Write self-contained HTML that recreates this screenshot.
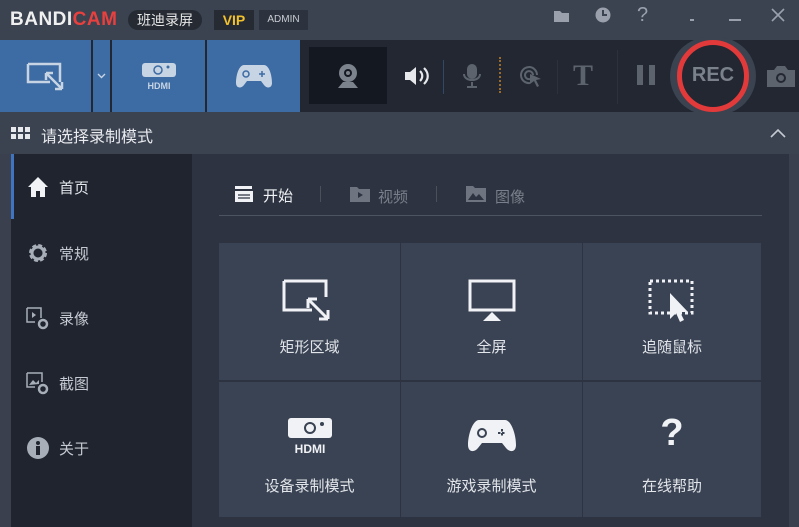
<!DOCTYPE html><html><head><meta charset="utf-8"><style>
*{margin:0;padding:0;box-sizing:border-box}
body{width:799px;height:527px;overflow:hidden;background:#3a404d;font-family:"Liberation Sans","Noto Sans CJK SC",sans-serif;position:relative;color:#d5d9e0}
.a{position:absolute}
.blue{background:#3d6ba3;top:40px;height:72px}
.cell{position:absolute;background:#3a4353;width:181px;height:137px}
.cell span{position:absolute;left:0;right:0;text-align:center;top:93px;font-size:15px;color:#e2e5ea}
.cell svg{position:absolute;left:50%;transform:translateX(-50%);top:34px}
.side{font-size:15px;color:#c5cad2}
</style></head><body>
<div class="a" style="left:0;top:0;width:799px;height:40px;background:#3b4250"></div>
<div class="a" style="left:10px;top:9px;font-size:19px;font-weight:bold;letter-spacing:0.5px;color:#f0f0f0">BANDI<span style="color:#e8403e">CAM</span></div>
<div class="a" style="left:128px;top:10px;width:74px;height:20px;border-radius:10px;background:#252a33;color:#e6e6e6;font-size:14px;text-align:center;line-height:20px">班迪录屏</div>
<div class="a" style="left:214px;top:10px;width:40px;height:20px;background:#252a33;color:#f2c12e;font-weight:bold;font-size:14px;text-align:center;line-height:20px">VIP</div>
<div class="a" style="left:259px;top:10px;width:49px;height:20px;background:#2d333e;color:#c9ccd2;font-size:10px;text-align:center;line-height:20px">ADMIN</div>
<svg class="a" style="left:552px;top:6px" width="20" height="20"><path d="M2 5h6l2 2h7v9H2z" fill="#9aa1ad"/></svg>
<svg class="a" style="left:594px;top:6px" width="18" height="18"><circle cx="9" cy="9" r="7.5" fill="#9aa1ad"/><path d="M9 4v5h4" stroke="#3b4250" stroke-width="2" fill="none"/></svg>
<div class="a" style="left:637px;top:4px;font-size:20px;color:#9aa1ad">?</div>
<div class="a" style="left:690px;top:19px;width:4px;height:2px;background:#9aa1ad"></div>
<div class="a" style="left:729px;top:19px;width:12px;height:2px;background:#9aa1ad"></div>
<svg class="a" style="left:771px;top:8px" width="14" height="14"><path d="M1 1L13 13M13 1L1 13" stroke="#9aa1ad" stroke-width="1.6"/></svg>
<div class="a" style="left:0;top:40px;width:799px;height:72px;background:#222731"></div>
<div class="a blue" style="left:0;width:91px"></div>
<div class="a blue" style="left:93px;width:17px"></div>
<div class="a blue" style="left:112px;width:93px"></div>
<div class="a blue" style="left:207px;width:93px"></div>
<svg class="a" style="left:26px;top:62px" width="42" height="30"><path d="M2 2h32v18" stroke="#c7d4e4" stroke-width="2.5" fill="none"/><path d="M24 20H2V2" stroke="#c7d4e4" stroke-width="2.5" fill="none"/><path d="M20 11l16 16M20 11h7M20 11v7M36 27h-7M36 27v-7" stroke="#c7d4e4" stroke-width="2.5" fill="none"/></svg>
<svg class="a" style="left:97px;top:73px" width="9" height="6"><path d="M1 1l3.5 3.5L8 1" stroke="#c7d4e4" stroke-width="1.4" fill="none"/></svg>
<svg class="a" style="left:141px;top:62px" width="36" height="28"><rect x="1" y="1" width="34" height="14" rx="3" fill="#c7d4e4"/><circle cx="17" cy="8" r="4" fill="none" stroke="#3d6ba3" stroke-width="1.5"/><circle cx="27" cy="5" r="1.5" fill="#3d6ba3"/><text x="18" y="27" font-size="9" font-weight="bold" text-anchor="middle" fill="#c7d4e4" font-family="Liberation Sans">HDMI</text></svg>
<svg class="a" style="left:236px;top:63px" width="36" height="26"><path d="M8 2h20c5 0 8 10 8 18 0 5-5 6-8 2l-3-4H11l-3 4c-3 4-8 3-8-2C0 12 3 2 8 2z" fill="#c7d4e4"/><circle cx="10" cy="11" r="3" fill="none" stroke="#3d6ba3" stroke-width="1.5"/><path d="M26 8v6M23 11h6" stroke="#3d6ba3" stroke-width="1.5"/></svg>
<div class="a" style="left:309px;top:47px;width:78px;height:57px;background:#141820"></div>
<svg class="a" style="left:334px;top:62px" width="28" height="28"><circle cx="14" cy="11" r="9" fill="#7d838d"/><circle cx="14" cy="11" r="4" fill="#141820"/><circle cx="14" cy="11" r="2" fill="#7d838d"/><path d="M4 26l5-6h10l5 6z" fill="#7d838d"/></svg>
<svg class="a" style="left:404px;top:65px" width="26" height="22"><path d="M1 7h5l6-5v18l-6-5H1z" fill="#e6e8ec"/><path d="M16 6c3 3 3 7 0 10M20 3c5 5 5 11 0 16" stroke="#e6e8ec" stroke-width="2.2" fill="none"/></svg>
<div class="a" style="left:443px;top:60px;width:1px;height:34px;background:#2f4a66"></div>
<svg class="a" style="left:462px;top:63px" width="20" height="26"><rect x="5" y="1" width="10" height="15" rx="5" fill="#5d636d"/><path d="M2 11c0 8 16 8 16 0M10 19v5M5 24h10" stroke="#5d636d" stroke-width="2" fill="none"/></svg>
<div class="a" style="left:499px;top:57px;width:2px;height:36px;border-left:2px dotted #9b6a2a"></div>
<svg class="a" style="left:519px;top:64px" width="24" height="26"><path d="M18 11a8 8 0 1 0-7 8" stroke="#5d636d" stroke-width="2" fill="none"/><path d="M14 11a4 4 0 1 0-3 4" stroke="#5d636d" stroke-width="2" fill="none"/><path d="M11 10l11 5-5 1 3 6-2 1-3-6-4 3z" fill="#5d636d"/></svg>
<div class="a" style="left:557px;top:60px;width:1px;height:34px;background:#2c313b"></div>
<div class="a" style="left:573px;top:59px;font-family:'Liberation Serif',serif;font-size:30px;font-weight:bold;color:#5d636d">T</div>
<div class="a" style="left:617px;top:50px;width:1px;height:54px;background:#2c313b"></div>
<div class="a" style="left:637px;top:65px;width:6px;height:20px;background:#5d636d"></div>
<div class="a" style="left:649px;top:65px;width:6px;height:20px;background:#5d636d"></div>
<div class="a" style="left:670px;top:37px;width:86px;height:78px;border-radius:39px;background:#3b4250"></div>
<div class="a" style="left:677px;top:40px;width:72px;height:72px;border-radius:50%;border:5px solid #e23a3a;background:#222731"></div>
<div class="a" style="left:677px;top:64px;width:72px;text-align:center;font-size:20px;font-weight:bold;color:#7b818b">REC</div>
<svg class="a" style="left:765px;top:64px" width="30" height="24"><path d="M2 6h7l3-4h8l3 4h7v17H2z" fill="#5d636d"/><circle cx="16" cy="14" r="5" fill="#222731"/><circle cx="16" cy="14" r="3" fill="#5d636d"/></svg>
<div class="a" style="left:0;top:112px;width:799px;height:42px;background:#3b4250"></div>
<svg class="a" style="left:11px;top:127px" width="19" height="12"><g fill="#e6e8ec"><rect x="0" y="0" width="5" height="5"/><rect x="7" y="0" width="5" height="5"/><rect x="14" y="0" width="5" height="5"/><rect x="0" y="7" width="5" height="5"/><rect x="7" y="7" width="5" height="5"/><rect x="14" y="7" width="5" height="5"/></g></svg>
<div class="a" style="left:41px;top:123px;font-size:16px;color:#e8eaee">请选择录制模式</div>
<svg class="a" style="left:770px;top:128px" width="16" height="10"><path d="M1 9l7-7 7 7" stroke="#c5cad2" stroke-width="1.6" fill="none"/></svg>
<div class="a" style="left:11px;top:154px;width:181px;height:373px;background:#1f242e"></div>
<div class="a" style="left:11px;top:154px;width:3px;height:65px;background:#3f74c0"></div>
<svg class="a" style="left:27px;top:176px" width="22" height="22"><path d="M11 1L1 11h3v10h5v-6h4v6h5V11h3z" fill="#f0f2f5"/></svg>
<div class="a side" style="left:59px;top:177px;color:#e4e7ec">首页</div>
<svg class="a" style="left:27px;top:242px" width="22" height="22"><circle cx="11" cy="11" r="7" fill="none" stroke="#a8aeb7" stroke-width="4" stroke-dasharray="3.5 2"/><circle cx="11" cy="11" r="6" fill="none" stroke="#a8aeb7" stroke-width="3"/></svg>
<div class="a side" style="left:59px;top:243px">常规</div>
<svg class="a" style="left:26px;top:307px" width="24" height="24"><path d="M1 1h14v10M9 15H1V1" stroke="#a8aeb7" stroke-width="1.5" fill="none"/><path d="M6 5l4 3-4 3z" fill="#a8aeb7"/><circle cx="17" cy="17" r="4" fill="none" stroke="#a8aeb7" stroke-width="2.5"/></svg>
<div class="a side" style="left:59px;top:308px">录像</div>
<svg class="a" style="left:26px;top:372px" width="24" height="24"><path d="M1 1h15v9M9 15H1V1" stroke="#a8aeb7" stroke-width="1.5" fill="none"/><path d="M3 13l4-5 3 3 3-3v4" fill="#a8aeb7"/><circle cx="17" cy="17" r="4" fill="none" stroke="#a8aeb7" stroke-width="2.5"/></svg>
<div class="a side" style="left:59px;top:373px">截图</div>
<svg class="a" style="left:27px;top:437px" width="22" height="22"><circle cx="11" cy="11" r="11" fill="#a8aeb7"/><circle cx="11" cy="6" r="2" fill="#1f242e"/><rect x="9" y="9" width="4" height="9" fill="#1f242e"/></svg>
<div class="a side" style="left:59px;top:438px">关于</div>
<div class="a" style="left:192px;top:154px;width:597px;height:373px;background:#2d3340"></div>
<svg class="a" style="left:234px;top:185px" width="20" height="18"><path d="M1 6h18v11H1z" fill="#f0f2f5"/><path d="M1 1l17 0v3H1z" fill="#f0f2f5"/><path d="M4 10h12M4 13h12" stroke="#2d3340" stroke-width="1.2"/></svg>
<div class="a" style="left:263px;top:185px;font-size:15px;color:#f0f2f5">开始</div>
<div class="a" style="left:320px;top:186px;width:1px;height:16px;background:#4a505c"></div>
<svg class="a" style="left:350px;top:185px" width="20" height="17"><path d="M0 2h7l2 2h11v13H0z" fill="#6f7580"/><path d="M8 7l5 3-5 3z" fill="#2d3340"/></svg>
<div class="a" style="left:378px;top:186px;font-size:15px;color:#7a808b">视频</div>
<div class="a" style="left:436px;top:186px;width:1px;height:16px;background:#4a505c"></div>
<svg class="a" style="left:466px;top:185px" width="20" height="17"><path d="M0 1h7l2 2h11v14H0z" fill="#6f7580"/><path d="M2 15l5-7 3 4 3-3 5 6z" fill="#2d3340"/></svg>
<div class="a" style="left:495px;top:186px;font-size:15px;color:#7a808b">图像</div>
<div class="a" style="left:219px;top:215px;width:543px;height:1px;background:#4d5461"></div>
<div class="cell" style="left:219px;top:243px"><svg width="56" height="42" style="top:36px"><path d="M2 2h42v16" stroke="#f0f2f5" stroke-width="3" fill="none"/><path d="M30 31H2V2" stroke="#f0f2f5" stroke-width="3" fill="none"/><path d="M26 20l20 20M26 20h9M26 20v9M46 40h-9M46 40v-9" stroke="#f0f2f5" stroke-width="3" fill="none"/></svg><span>矩形区域</span></div>
<div class="cell" style="left:401px;top:243px"><svg width="48" height="44" style="top:36px"><rect x="2" y="2" width="44" height="29" fill="none" stroke="#f0f2f5" stroke-width="3"/><path d="M24 33l9 9H15z" fill="#f0f2f5"/></svg><span>全屏</span></div>
<div class="cell" style="left:583px;top:243px;width:178px"><svg width="48" height="44" style="top:36px"><rect x="2" y="2" width="42" height="32" fill="none" stroke="#f0f2f5" stroke-width="3" stroke-dasharray="3 3"/><path d="M22 14v26l6-6 4 9 4-2-4-8h8z" fill="#f0f2f5"/></svg><span>追随鼠标</span></div>
<div class="cell" style="left:219px;top:382px;height:135px"><svg width="48" height="40" style="top:34px"><rect x="2" y="2" width="44" height="20" rx="3" fill="#f0f2f5"/><circle cx="24" cy="12" r="5" fill="none" stroke="#3a4353" stroke-width="2"/><circle cx="36" cy="8" r="2" fill="#3a4353"/><text x="24" y="37" font-size="12" font-weight="bold" text-anchor="middle" fill="#f0f2f5" font-family="Liberation Sans">HDMI</text></svg><span>设备录制模式</span></div>
<div class="cell" style="left:401px;top:382px;height:135px"><svg width="48" height="38" style="top:36px"><path d="M11 2h26c6 0 11 14 11 25 0 7-6 8-10 3l-4-5H14l-4 5c-4 5-10 4-10-3C0 16 5 2 11 2z" fill="#f0f2f5"/><circle cx="14" cy="15" r="4" fill="none" stroke="#3a4353" stroke-width="2"/><path d="M34 11v8M30 15h8" stroke="#3a4353" stroke-width="2" stroke-dasharray="2.5 1.5"/></svg><span>游戏录制模式</span></div>
<div class="cell" style="left:583px;top:382px;width:178px;height:135px"><div style="position:absolute;left:0;right:0;top:30px;text-align:center;font-size:38px;font-weight:bold;color:#f0f2f5">?</div><span>在线帮助</span></div>
</body></html>
